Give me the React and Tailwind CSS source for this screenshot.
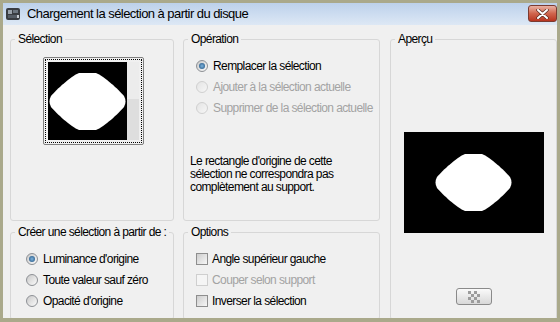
import React from 'react';

const font = "font-['Liberation_Sans',Arial,sans-serif]";

const SHAPE =
  'M31 0 Q39.5 -1 48 0 C56 3 71 17 76 23 Q79 28.5 76 34 C71 40 56 54 48 57 Q39.5 58 31 57 C23 54 8 40 3 34 Q0 28.5 3 23 C8 17 23 3 31 0 Z';

const Shape = () => (
  <svg width="79" height="57" viewBox="0 0 79 57">
    <path d={SHAPE} fill="#fff" />
  </svg>
);

const Radio = ({ checked, disabled, label }) => (
  <div className="h-[21px] flex items-center">
    <span
      className={`shrink-0 w-[12px] h-[12px] rounded-full border flex items-center justify-center ${
        disabled
          ? 'border-[#d0d0d0] bg-linear-to-br from-[#e4e4e4] to-[#f6f6f6]'
          : 'border-[#8d9095] bg-linear-to-br from-[#c9c9c9] to-[#fbfbfb]'
      }`}
    >
      {checked && (
        <span className="w-[6px] h-[6px] rounded-full bg-radial from-[#7fb4dd] to-[#1b4f7d]" />
      )}
    </span>
    <span className={`ml-[5px] whitespace-nowrap ${disabled ? 'text-[#a3a3a3]' : 'text-black'}`}>{label}</span>
  </div>
);

const Check = ({ disabled, label }) => (
  <div className="h-[21px] flex items-center">
    <span
      className={`shrink-0 w-[12px] h-[12px] border ${
        disabled
          ? 'border-[#cfcfcf] bg-[#f5f5f5]'
          : 'border-[#8e8e8e] bg-linear-to-br from-[#cdcdcd] to-[#f7f7f7]'
      }`}
    />
    <span className={`ml-[4px] whitespace-nowrap ${disabled ? 'text-[#a3a3a3]' : 'text-black'}`}>{label}</span>
  </div>
);

const Group = ({ title, className, children }) => (
  <fieldset className={`border border-[#d7d7d7] rounded-[3px] min-w-0 ${className}`}>
    <legend className="ml-[4px] px-[3px] leading-[14px] whitespace-nowrap">{title}</legend>
    {children}
  </fieldset>
);

const Checker = () => (
  <svg width="12" height="12" viewBox="0 0 12 12">
    {[0, 1, 2, 3].map((r) =>
      [0, 1, 2, 3].map((c) =>
        (r + c) % 2 === 0 ? (
          <rect key={`${r}-${c}`} x={c * 3} y={r * 3} width="3" height="3" fill="#9c9c9c" />
        ) : null
      )
    )}
  </svg>
);

const App = () => {
  return (
    <div className={`w-[560px] h-[322px] bg-[#aaa98b] pt-[3px] px-[3px] overflow-hidden text-[12px] tracking-[-0.6px] ${font}`}>
      {/* Title bar */}
      <div className="h-[22px] flex items-start bg-linear-to-b from-[#bcd1eb] to-[#dde8f5]">
        <svg className="ml-[2px] mt-[4px]" width="16" height="14" viewBox="0 0 16 14">
          <rect x="1" y="1" width="14" height="12" rx="2" fill="#3a3d42" />
          <rect x="3" y="3" width="4" height="4" fill="#9aa2ab" />
          <rect x="8" y="3" width="5" height="3" fill="#6d7680" />
          <rect x="3" y="8" width="9" height="3" fill="#565d66" />
          <rect x="12" y="8" width="2" height="3" fill="#c9ced4" />
        </svg>
        <span className="ml-[6px] mt-[2px] text-[13px] tracking-[-0.55px] leading-[18px] text-black whitespace-nowrap">
          Chargement la sélection à partir du disque
        </span>
        <div className="ml-auto mt-[2px] w-[29px] h-[17px] rounded-[3px] border border-[#7b3b31] bg-linear-to-b from-[#e8b1a3] via-[#d0654d] to-[#b8341f] flex items-center justify-center">
          <svg width="13" height="10" viewBox="0 0 13 10">
            <path d="M2 1 L11 9 M11 1 L2 9" stroke="#5a2a22" strokeWidth="3.4" strokeLinecap="round" />
            <path d="M2 1 L11 9 M11 1 L2 9" stroke="#fff" strokeWidth="2" strokeLinecap="round" />
          </svg>
        </div>
      </div>

      {/* Body */}
      <div className="h-[293px] bg-[#f0f0f0] pt-[7px] pl-[7px] flex gap-[10px] overflow-hidden">
        <div className="w-[370px] flex flex-col gap-[4px]">
          <div className="flex gap-[9px]">
            <Group title="Sélection" className="w-[164px] h-[189px]">
              <div className="mt-[11px] ml-[32px] w-[101px] h-[88px] border border-[#7f7f7f] rounded-[2px] p-px">
                <div className="h-full border border-dotted border-black p-[2px] flex">
                  <div className="w-[79px] h-full bg-black flex items-center justify-center">
                    <Shape />
                  </div>
                  <div className="w-[12px] h-full flex flex-col">
                    <div className="h-[37px] bg-[#ececec]" />
                    <div className="flex-1 bg-[#dedede]" />
                  </div>
                </div>
              </div>
            </Group>
            <Group title="Opération" className="w-[197px] h-[189px]">
              <div className="mt-[9px] pl-[12px]">
                <Radio checked label="Remplacer la sélection" />
                <Radio disabled label="Ajouter à la sélection actuelle" />
                <Radio disabled label="Supprimer de la sélection actuelle" />
              </div>
              <p className="mt-[37px] pl-[6px] leading-[13px] text-black whitespace-nowrap">
                Le rectangle d'origine de cette
                <br />
                sélection ne correspondra pas
                <br />
                complètement au support.
              </p>
            </Group>
          </div>
          <div className="flex gap-[9px]">
            <Group title="Créer une sélection à partir de :" className="w-[164px] h-[95px]">
              <div className="mt-[9px] pl-[15px]">
                <Radio checked label="Luminance d'origine" />
                <Radio label="Toute valeur sauf zéro" />
                <Radio label="Opacité d'origine" />
              </div>
            </Group>
            <Group title="Options" className="w-[197px] h-[95px]">
              <div className="mt-[9px] pl-[12px]">
                <Check label="Angle supérieur gauche" />
                <Check disabled label="Couper selon support" />
                <Check label="Inverser la sélection" />
              </div>
            </Group>
          </div>
        </div>
        <Group title="Aperçu" className="w-[167px] h-[288px]">
          <div className="mt-[86px] flex flex-col items-center">
            <div className="w-[140px] h-[101px] bg-black flex items-center justify-center">
              <Shape />
            </div>
            <div className="mt-[55px] w-[36px] h-[17px] border border-[#8a8a8a] rounded-[3px] bg-linear-to-b from-[#fafafa] to-[#d8d8d8] flex items-center justify-center">
              <Checker />
            </div>
          </div>
        </Group>
      </div>
    </div>
  );
};

export default App;
